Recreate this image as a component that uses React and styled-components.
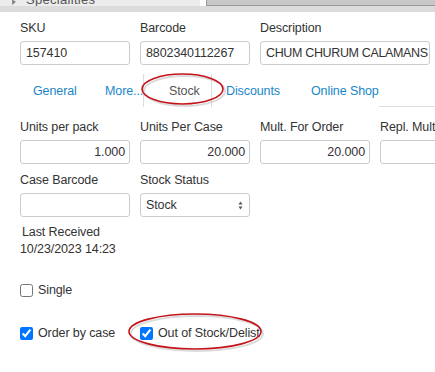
import React from "react";
import styled, { createGlobalStyle } from "styled-components";

const Global = createGlobalStyle`
  body {
    margin: 0;
    background: #fff;
    font-family: "Liberation Sans", Arial, sans-serif;
    font-size: 12.5px;
    letter-spacing: -0.1px;
    color: #333;
  }
`;

const Page = styled.div`
  width: 435px;
  height: 372px;
  overflow: hidden;
  position: relative;
`;

const TopStrip = styled.div`
  display: flex;
  height: 6px;
  overflow: hidden;
`;

const TreePane = styled.div`
  width: 200px;
  background: #ececec;
  position: relative;
  overflow: hidden;
  span {
    position: absolute;
    left: 26px;
    top: -8px;
    font-size: 13px;
    color: #555;
    letter-spacing: 0.3px;
  }
  i {
    position: absolute;
    left: 12px;
    top: -1px;
    width: 0;
    height: 0;
    border-left: 4px solid #888;
    border-top: 3px solid transparent;
    border-bottom: 3px solid transparent;
  }
`;

const GapPane = styled.div`
  width: 6px;
  background: #fff;
`;

const ToolPane = styled.div`
  flex: 1;
  background: #c8c8c8;
  border-left: 1px solid #999;
  border-bottom: 1px solid #999;
  box-sizing: border-box;
`;

const GrayBar = styled.div`
  height: 6px;
  background: #dcdcdc;
`;

const Content = styled.div`
  padding: 9px 0 0 20px;
`;

const Row = styled.div`
  display: flex;
  gap: 10px;
  margin-bottom: ${(p) => p.mb || 0}px;
`;

const Field = styled.div`
  display: flex;
  flex-direction: column;
  width: ${(p) => p.w || 110}px;
  flex-shrink: 0;
`;

const Label = styled.label`
  line-height: 15px;
  margin-bottom: 5px;
  white-space: nowrap;
`;

const Input = styled.div`
  box-sizing: border-box;
  height: 24px;
  border: 1px solid #ccc;
  border-radius: 3px;
  padding: 0 4px 0 5px;
  display: flex;
  align-items: center;
  justify-content: ${(p) => (p.right ? "flex-end" : "flex-start")};
  letter-spacing: ${(p) => (p.tight ? "-0.35px" : "inherit")};
  white-space: nowrap;
  overflow: hidden;
  color: #333;
`;

const Select = styled(Input)`
  justify-content: space-between;
  padding: 0 6px 0 5px;
  svg {
    display: block;
  }
`;

const Tabs = styled.div`
  display: flex;
  height: 32px;
  margin: 9px 0 13px;
  border-bottom: 1px solid #ddd;
`;

const Tab = styled.div`
  box-sizing: border-box;
  width: ${(p) => (p.w ? p.w + "px" : "auto")};
  padding-left: ${(p) => p.pl || 13}px;
  display: flex;
  align-items: center;
  white-space: nowrap;
  color: ${(p) => (p.active ? "#555" : "#1a86c8")};
  border-left: ${(p) => (p.active ? "1px solid #ddd" : "none")};
  border-right: ${(p) => (p.active ? "1px solid #ddd" : "none")};
  background: #fff;
  margin-bottom: -1px;
`;

const Info = styled.div`
  margin: 0 0 0 2px;
  line-height: 17px;
`;

const DateText = styled.div`
  line-height: 17px;
  margin: 0 0 25px 0;
`;

const Check = styled.label`
  display: flex;
  align-items: center;
  gap: 5px;
  white-space: nowrap;
  width: ${(p) => (p.w ? p.w + "px" : "auto")};
  input {
    margin: 0;
    width: 13px;
    height: 13px;
    accent-color: #0075ff;
  }
`;

const CheckRow = styled.div`
  display: flex;
  margin-bottom: ${(p) => p.mb || 0}px;
`;

const Ring = styled.svg`
  position: absolute;
  left: ${(p) => p.x}px;
  top: ${(p) => p.y}px;
  overflow: visible;
  pointer-events: none;
`;

function Annotation({ x, y, w, h }) {
  return (
    <Ring x={x} y={y} width={w} height={h}>
      <ellipse
        cx={w / 2 + 2}
        cy={h / 2 + 2}
        rx={w / 2 - 1}
        ry={h / 2 - 1}
        fill="none"
        stroke="#999"
        strokeOpacity="0.35"
        strokeWidth="2"
      />
      <ellipse
        cx={w / 2}
        cy={h / 2}
        rx={w / 2 - 1}
        ry={h / 2 - 1}
        fill="none"
        stroke="#c4141b"
        strokeWidth="1.6"
      />
    </Ring>
  );
}

export default function App() {
  return (
    <Page>
      <Global />
      <TopStrip>
        <TreePane>
          <i />
          <span>Specialities</span>
        </TreePane>
        <GapPane />
        <ToolPane />
      </TopStrip>
      <GrayBar />
      <Content>
        <Row>
          <Field>
            <Label>SKU</Label>
            <Input>157410</Input>
          </Field>
          <Field>
            <Label>Barcode</Label>
            <Input>8802340112267</Input>
          </Field>
          <Field w={170}>
            <Label>Description</Label>
            <Input tight>CHUM CHURUM CALAMANS</Input>
          </Field>
        </Row>
        <Tabs>
          <Tab w={72}>General</Tab>
          <Tab w={51}>More...</Tab>
          <Tab w={69} pl={25} active>
            Stock
          </Tab>
          <Tab w={86} pl={14}>
            Discounts
          </Tab>
          <Tab pl={0}>Online Shop</Tab>
        </Tabs>
        <Row mb={9}>
          <Field>
            <Label>Units per pack</Label>
            <Input right>1.000</Input>
          </Field>
          <Field>
            <Label>Units Per Case</Label>
            <Input right>20.000</Input>
          </Field>
          <Field>
            <Label>Mult. For Order</Label>
            <Input right>20.000</Input>
          </Field>
          <Field>
            <Label>Repl. Mult</Label>
            <Input right />
          </Field>
        </Row>
        <Row mb={7}>
          <Field>
            <Label>Case Barcode</Label>
            <Input />
          </Field>
          <Field>
            <Label>Stock Status</Label>
            <Select>
              Stock
              <svg width="5" height="9" viewBox="0 0 5 9">
                <path d="M2.5 0.5 L4.5 3.5 H0.5 Z" fill="#555" />
                <path d="M2.5 8.5 L4.5 5.5 H0.5 Z" fill="#555" />
              </svg>
            </Select>
          </Field>
        </Row>
        <Info>Last Received</Info>
        <DateText>10/23/2023 14:23</DateText>
        <CheckRow mb={29}>
          <Check>
            <input type="checkbox" readOnly />
            Single
          </Check>
        </CheckRow>
        <CheckRow>
          <Check w={120}>
            <input type="checkbox" checked readOnly />
            Order by case
          </Check>
          <Check>
            <input type="checkbox" checked readOnly />
            Out of Stock/Delist
          </Check>
        </CheckRow>
      </Content>
      <Annotation x={141} y={73} w={83} h={32} />
      <Annotation x={128} y={313} w={134} h={37} />
    </Page>
  );
}
